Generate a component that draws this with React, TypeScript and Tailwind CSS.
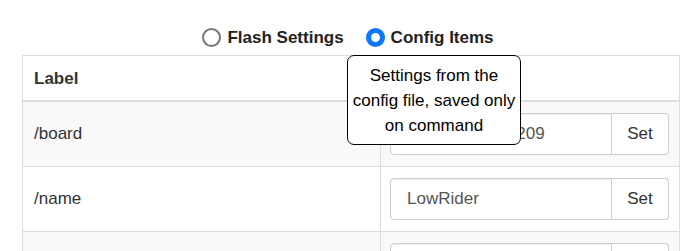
const rows = [
  { label: '/board', value: 'Jackpot TMC2209' },
  { label: '/name', value: 'LowRider' },
  { label: '', value: '' },
]

function Radio({ checked, label }: { checked?: boolean; label: string }) {
  return (
    <label className="flex items-center gap-[6px]">
      {checked ? (
        <span className="box-border h-[19px] w-[19px] rounded-full border-[5px] border-[#0b78fd] bg-white" />
      ) : (
        <span className="box-border h-[19px] w-[19px] rounded-full border-2 border-[#767676] bg-white" />
      )}
      <span className="text-[17px] font-bold text-[#222]">{label}</span>
    </label>
  )
}

export default function App() {
  return (
    <div className="h-[251px] w-[690px] overflow-hidden bg-white font-['Liberation_Sans',Arial,sans-serif] text-[17px] text-[#333]">
      <div className="relative ml-[22px] w-[658px]">
        <div className="flex h-[55px] items-center justify-center gap-[22px] pr-[6px] pt-[20px]">
          <Radio label="Flash Settings" />
          <Radio checked label="Config Items" />
        </div>

        <div className="border border-[#ddd]">
          <div className="grid h-[46px] grid-cols-[357px_1fr] border-b-2 border-[#ddd]">
            <div className="flex items-center px-[11px] pt-[2px] font-bold">Label</div>
            <div className="border-l border-[#ddd]" />
          </div>
          {rows.map((r, i) => (
            <div
              key={i}
              className={`grid grid-cols-[357px_1fr] border-b border-[#ddd] ${i % 2 === 0 ? 'bg-[#f9f9f9]' : 'bg-white'}`}
            >
              <div className="flex items-center px-[11px]">{r.label}</div>
              <div className="border-l border-[#ddd] py-[11px] pl-[9px] pr-[10px]">
                <div className="flex h-[42px]">
                  <div className="flex flex-1 items-center rounded-l-[4px] border border-[#ccc] bg-white pl-[16px] text-[#555] shadow-[inset_0_1px_1px_rgba(0,0,0,0.075)]">
                    {r.value}
                  </div>
                  <button
                    type="button"
                    className="w-[57px] rounded-r-[4px] border border-l-0 border-[#ccc] bg-white text-[17px] text-[#333]"
                  >
                    Set
                  </button>
                </div>
              </div>
            </div>
          ))}
        </div>

        <div className="absolute left-[325px] top-[55px] flex h-[90px] w-[174px] flex-col items-center justify-center rounded-[7px] border border-black bg-white text-center text-[17px] leading-[25px] text-black">
          <span>Settings from the</span>
          <span>config file, saved only</span>
          <span>on command</span>
        </div>
      </div>
    </div>
  )
}
